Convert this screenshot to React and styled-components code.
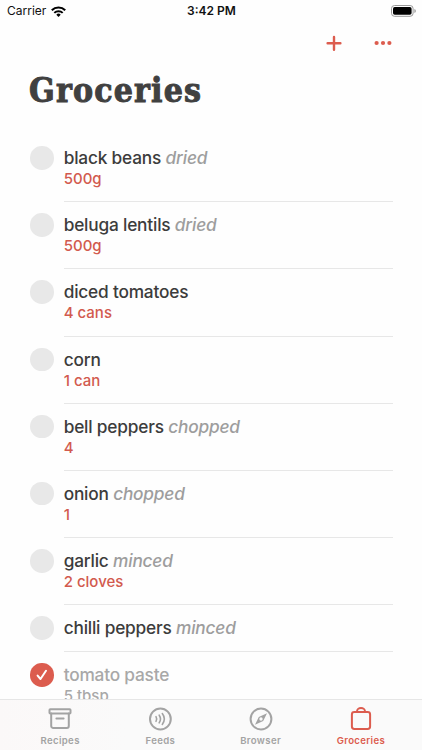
import React from "react"
import styled, { createGlobalStyle } from "styled-components"

const GlobalStyle = createGlobalStyle`
  * {
    box-sizing: border-box;
  }
  body {
    margin: 0;
    background: #fefefe;
    font-family: Inter, "Liberation Sans", sans-serif;
    -webkit-font-smoothing: antialiased;
  }
`

const Screen = styled.div`
  display: flex;
  flex-direction: column;
  width: 422px;
  height: 750px;
  overflow: hidden;
  background: #fefefe;
`

const StatusBar = styled.header`
  display: grid;
  grid-template-columns: 1fr auto 1fr;
  align-items: center;
  flex: none;
  height: 22px;
  padding: 0 6px 0 7px;
  color: #111;
  font-size: 12px;
  line-height: 22px;
`

const Carrier = styled.span`
  display: flex;
  align-items: center;
  gap: 5px;
`

const Clock = styled.time`
  font-weight: 600;
  font-size: 12px;
`

const Battery = styled.svg`
  justify-self: end;
`

const Actions = styled.div`
  display: flex;
  justify-content: flex-end;
  align-items: center;
  flex: none;
  gap: 27.5px;
  height: 42px;
  padding-right: 28px;
`

const ActionButton = styled.button`
  display: flex;
  padding: 0;
  border: 0;
  background: none;
  color: #dc5c4e;
`

const Title = styled.h1`
  flex: none;
  height: 71px;
  margin: 0;
  padding: 6px 0 0 29px;
  color: #404040;
  font-family: "DejaVu Serif Condensed", "DejaVu Serif", serif;
  font-stretch: condensed;
  font-weight: 700;
  font-size: 33.5px;
  line-height: 42px;
  letter-spacing: 1.15px;
  -webkit-text-stroke: 0.9px #404040;
`

const List = styled.ul`
  flex: 1;
  min-height: 0;
  margin: 0;
  padding: 0 29px 0 30px;
  overflow: hidden;
  list-style: none;
`

const Item = styled.li`
  display: flex;
  gap: 10.2px;
`

const Check = styled.span`
  display: flex;
  align-items: center;
  justify-content: center;
  flex: none;
  width: 23.5px;
  height: 23.5px;
  margin-top: 11px;
  border-radius: 50%;
  background: ${props => (props.$done ? "#dc5c4e" : "#e8e8e8")};
`

const ItemBody = styled.div`
  flex: 1;
  padding: 12px 0;
  border-bottom: 1px solid #e7e7e7;
  white-space: nowrap;
`

const Name = styled.div`
  height: 22px;
  color: ${props => (props.$done ? "#a8a8a8" : "#3c3c3c")};
  font-weight: ${props => (props.$done ? 500 : 530)};
  font-size: 17.3px;
  line-height: 22px;
  letter-spacing: -0.2px;
`

const Note = styled.em`
  color: #9d9d9d;
  font-weight: 500;
`

const Quantity = styled.div`
  height: 20.2px;
  color: ${props => (props.$done ? "#a8a8a8" : "#d25a4e")};
  font-weight: 530;
  font-size: 15px;
  line-height: 20.2px;
  letter-spacing: 0;
`

const TabBar = styled.nav`
  display: grid;
  grid-template-columns: repeat(4, 1fr);
  flex: none;
  height: 51px;
  padding: 0 11px 0 10px;
  border-top: 1px solid #e6e6e6;
  background: linear-gradient(to right, #fbf8f8, #fafafa 30%);
`

const Tab = styled.a`
  display: flex;
  flex-direction: column;
  align-items: center;
  padding-top: 7px;
  color: ${props => (props.$active ? "#dc5c4e" : "#a3a3a3")};
  font-weight: 600;
  font-size: 9.6px;
  line-height: 15px;
  letter-spacing: 0.35px;
`

const TabIcon = styled.svg`
  display: block;
  width: 24px;
  height: 24px;
  margin-bottom: 2px;
  fill: none;
  stroke: currentColor;
  stroke-width: 2;
  stroke-linecap: round;
  stroke-linejoin: round;
`

const groceries = [
  { name: "black beans", note: "dried", quantity: "500g" },
  { name: "beluga lentils", note: "dried", quantity: "500g" },
  { name: "diced tomatoes", quantity: "4 cans" },
  { name: "corn", quantity: "1 can" },
  { name: "bell peppers", note: "chopped", quantity: "4" },
  { name: "onion", note: "chopped", quantity: "1" },
  { name: "garlic", note: "minced", quantity: "2 cloves" },
  { name: "chilli peppers", note: "minced" },
  { name: "tomato paste", quantity: "5 tbsp", done: true },
]

const tabs = [
  {
    label: "Recipes",
    icon: (
      <>
        <rect x="1.5" y="2.2" width="21" height="4.4" rx="0.8" />
        <path d="M3.2 6.6V19a2 2 0 0 0 2 2h13.6a2 2 0 0 0 2-2V6.6M8.4 11.4h7.2" />
      </>
    ),
  },
  {
    label: "Feeds",
    icon: (
      <>
        <circle cx="12.4" cy="12" r="10.4" />
        <path
          strokeWidth="1.6"
          d="M8 9.7Q9.4 12 8 14.3M11.2 8.2Q13.8 12 11.2 15.8M14.3 6.6Q18.4 12 14.3 17.4"
        />
      </>
    ),
  },
  {
    label: "Browser",
    icon: (
      <>
        <circle cx="12" cy="12" r="10.4" />
        <path
          fill="currentColor"
          stroke="none"
          fillRule="evenodd"
          d="M18 6.2L14.2 14.1L6 17.8L9.8 9.9ZM12 10.3a1.7 1.7 0 1 0 0 3.4a1.7 1.7 0 0 0 0-3.4Z"
        />
      </>
    ),
  },
  {
    label: "Groceries",
    active: true,
    icon: (
      <>
        <rect x="2.9" y="5" width="18.2" height="17" rx="2.4" />
        <path d="M8 5V4.4a4 3.4 0 0 1 8 0V5" />
      </>
    ),
  },
]

const App = () => (
  <>
    <GlobalStyle />
    <Screen>
      <StatusBar>
        <Carrier>
          Carrier
          <svg width="15" height="11" viewBox="0 0 15 11" fill="none" stroke="#000">
            <path strokeWidth="2.1" d="M0.8 4.2a9.5 9.5 0 0 1 13.4 0" />
            <path strokeWidth="2" d="M3.3 6.9a6 6 0 0 1 8.4 0" />
            <path fill="#000" stroke="none" d="M7.5 10.9L5.3 8.7a3.1 3.1 0 0 1 4.4 0Z" />
          </svg>
        </Carrier>
        <Clock>3:42 PM</Clock>
        <Battery width="25" height="12" viewBox="0 0 25 12">
          <rect x="0.5" y="0.5" width="21.6" height="10.8" rx="3" fill="none" stroke="#999" />
          <rect x="2" y="2" width="18.6" height="7.8" rx="1.7" />
          <path fill="#999" d="M23.4 4v4a2.1 2.1 0 0 0 0-4Z" />
        </Battery>
      </StatusBar>
      <Actions>
        <ActionButton aria-label="Add">
          <svg width="22" height="22" viewBox="0 0 22 22">
            <path
              d="M11 4.9v12.8M4.6 11.3h12.8"
              stroke="currentColor"
              strokeWidth="2.4"
              strokeLinecap="round"
            />
          </svg>
        </ActionButton>
        <ActionButton aria-label="More">
          <svg width="22" height="22" viewBox="0 0 22 22" fill="currentColor">
            <circle cx="4.6" cy="11" r="2.1" />
            <circle cx="11" cy="11" r="2.1" />
            <circle cx="17.4" cy="11" r="2.1" />
          </svg>
        </ActionButton>
      </Actions>
      <Title>Groceries</Title>
      <List>
        {groceries.map(({ name, note, quantity, done }) => (
          <Item key={name}>
            <Check $done={done}>
              {done && (
                <svg width="12" height="12" viewBox="0 0 12 12">
                  <path
                    d="M1.6 6.6L4.5 10L10 1.8"
                    fill="none"
                    stroke="#fff"
                    strokeWidth="2"
                    strokeLinecap="round"
                    strokeLinejoin="round"
                  />
                </svg>
              )}
            </Check>
            <ItemBody>
              <Name $done={done}>
                {name} {note && <Note>{note}</Note>}
              </Name>
              {quantity && <Quantity $done={done}>{quantity}</Quantity>}
            </ItemBody>
          </Item>
        ))}
      </List>
      <TabBar>
        {tabs.map(({ label, icon, active }) => (
          <Tab key={label} $active={active}>
            <TabIcon viewBox="0 0 24 24">{icon}</TabIcon>
            {label}
          </Tab>
        ))}
      </TabBar>
    </Screen>
  </>
)

export default App
